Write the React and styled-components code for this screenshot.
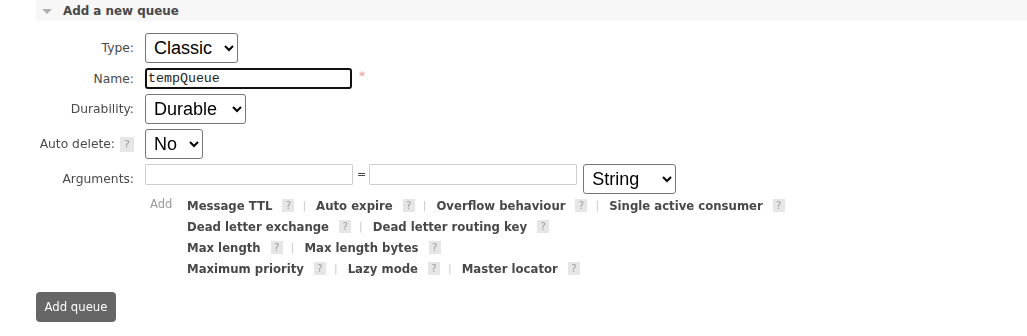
import React, { useEffect, useRef } from "react";
import styled, { createGlobalStyle } from "styled-components";

const Global = createGlobalStyle`
  html, body { margin: 0; padding: 0; background: #fff; }
  body { font-family: "DejaVu Sans", Verdana, sans-serif; font-size: 12px; color: #484848; }
`;

const Page = styled.div`
  display: flex;
  flex-direction: column;
`;

const SectionHeader = styled.div`
  margin-left: 36px;
  height: 21px;
  background: #f7f7f7;
  display: flex;
  align-items: center;
  gap: 11px;
  padding-left: 6px;
  font-weight: bold;
  font-size: 11.9px;
  color: #484848;
`;

const Triangle = styled.span`
  width: 0;
  height: 0;
  border-left: 5px solid transparent;
  border-right: 5px solid transparent;
  border-top: 5px solid #b0b0b0;
  margin-top: 1px;
`;

const Form = styled.div`
  display: grid;
  grid-template-columns: 134px 1fr;
  column-gap: 11px;
  row-gap: 5px;
  align-items: center;
  margin-top: 12px;
`;

const Label = styled.label`
  display: flex;
  justify-content: flex-end;
  align-items: center;
  gap: 5px;
  color: #4a4a4a;
  font-size: 12.3px;
  white-space: nowrap;
`;

const Help = styled.span`
  display: inline-flex;
  align-items: center;
  justify-content: center;
  width: ${(p) => (p.$big ? 14 : 12)}px;
  height: ${(p) => (p.$big ? 15 : 13)}px;
  background: #e6e6e6;
  color: #9c9c9c;
  font-size: ${(p) => (p.$big ? 11 : 10)}px;
  font-weight: normal;
`;

const Select = styled.select`
  font-family: "Liberation Sans", Arial, sans-serif;
  font-size: 18px;
  height: 30px;
  width: ${(p) => p.$w}px;
  color: #000;
  background: #fff;
  border: 1px solid #767676;
  border-radius: 3px;
  padding: 0 4px;
  box-sizing: border-box;
  margin-left: ${(p) => p.$ml || 0}px;
`;

const Cell = styled.div`
  display: flex;
  align-items: center;
`;

const TextInput = styled.input`
  width: 207px;
  height: 21px;
  box-sizing: border-box;
  border: ${(p) => (p.$focus ? "2px solid #101010" : "1px solid #cfcfcf")};
  border-radius: ${(p) => (p.$focus ? "3px" : "1px")};
  font-family: "Liberation Mono", "Courier New", monospace;
  font-size: 13.3px;
  padding: 0 ${(p) => (p.$focus ? "1px" : "4px")};
  color: #222;
  outline: none;
`;

const Req = styled.span`
  color: #ee8f8f;
  font-size: 12px;
  margin-left: 7px;
  align-self: flex-start;
  margin-top: 1px;
`;

const Eq = styled.span`
  color: #484848;
  font-size: 11px;
  line-height: 21px;
  margin: 0 3px 0 4px;
`;

const ArgsRow = styled.div`
  display: flex;
  align-items: flex-start;
`;

const ArgsInput = styled(TextInput)`
  width: 208px;
`;

const AddBlock = styled.div`
  grid-column: 2;
  display: flex;
  align-items: flex-start;
  margin-top: -4px;
`;

const AddWord = styled.span`
  color: #9a9a9a;
  font-size: 11.5px;
  width: 42px;
  padding-left: 5px;
  line-height: 19px;
  box-sizing: border-box;
`;

const Links = styled.div`
  display: flex;
  flex-direction: column;
`;

const LinkRow = styled.div`
  display: flex;
  align-items: center;
  height: 21px;
`;

const Link = styled.span`
  font-weight: bold;
  font-size: 11.7px;
  color: #484848;
  margin-right: 10px;
`;

const Sep = styled.span`
  color: #c8c8c8;
  font-size: 11px;
  margin: 0 10px 0 8px;
`;

const Button = styled.button`
  margin-left: 36px;
  margin-top: 13px;
  align-self: flex-start;
  height: 30px;
  width: 80px;
  background: #666;
  color: #fff;
  border: none;
  border-radius: 4px;
  font-family: "DejaVu Sans", Verdana, sans-serif;
  font-size: 11.7px;
  padding: 0;
`;

const rows = [
  ["Message TTL", "Auto expire", "Overflow behaviour", "Single active consumer"],
  ["Dead letter exchange", "Dead letter routing key"],
  ["Max length", "Max length bytes"],
  ["Maximum priority", "Lazy mode", "Master locator"],
];

export default function App() {
  const nameRef = useRef(null);
  useEffect(() => {
    const el = nameRef.current;
    if (el) {
      el.focus();
      el.setSelectionRange(el.value.length, el.value.length);
    }
  }, []);

  return (
    <Page>
      <Global />
      <SectionHeader>
        <Triangle />
        Add a new queue
      </SectionHeader>
      <Form>
        <Label>Type:</Label>
        <Cell>
          <Select $w={93} defaultValue="classic">
            <option value="classic">Classic</option>
            <option value="quorum">Quorum</option>
          </Select>
        </Cell>

        <Label>Name:</Label>
        <Cell>
          <TextInput ref={nameRef} $focus defaultValue="tempQueue" />
          <Req>*</Req>
        </Cell>

        <Label>Durability:</Label>
        <Cell>
          <Select $w={101} defaultValue="durable">
            <option value="durable">Durable</option>
            <option value="transient">Transient</option>
          </Select>
        </Cell>

        <Label>
          Auto delete: <Help $big>?</Help>
        </Label>
        <Cell>
          <Select $w={58} defaultValue="no">
            <option value="no">No</option>
            <option value="yes">Yes</option>
          </Select>
        </Cell>

        <Label>Arguments:</Label>
        <ArgsRow>
          <ArgsInput />
          <Eq>=</Eq>
          <ArgsInput />
          <Select $w={93} $ml={6} defaultValue="string">
            <option value="string">String</option>
            <option value="number">Number</option>
            <option value="boolean">Boolean</option>
            <option value="list">List</option>
          </Select>
        </ArgsRow>

        <AddBlock>
          <AddWord>Add</AddWord>
          <Links>
            {rows.map((r, i) => (
              <LinkRow key={i}>
                {r.map((t, j) => (
                  <React.Fragment key={t}>
                    {j > 0 && <Sep>|</Sep>}
                    <Link>{t}</Link>
                    <Help>?</Help>
                  </React.Fragment>
                ))}
              </LinkRow>
            ))}
          </Links>
        </AddBlock>
      </Form>
      <Button>Add queue</Button>
    </Page>
  );
}
